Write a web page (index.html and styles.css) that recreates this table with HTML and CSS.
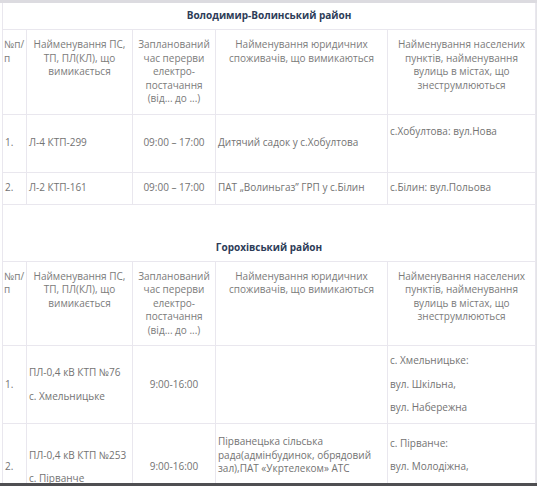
FILE: index.html
```html
<!DOCTYPE html>
<html lang="uk">
<head>
<meta charset="utf-8">
<link rel="stylesheet" href="styles.css">
</head>
<body>
<div class="frame">
<table class="grid">
  <colgroup>
    <col class="c1"><col class="c2"><col class="c3"><col class="c4"><col class="c5">
  </colgroup>
  <tr class="title"><td colspan="5">Володимир-Волинський район</td></tr>
  <tr class="head">
    <td class="left">№п/п</td>
    <td>Найменування ПС, ТП, ПЛ(КЛ), що вимикається</td>
    <td>Запланований час перерви електро-постачання (від... до ...)</td>
    <td>Найменування юридичних споживачів, що вимикаються</td>
    <td>Найменування населених пунктів, найменування вулиць в містах, що знеструмлюються</td>
  </tr>
  <tr class="row r1">
    <td>1.</td>
    <td>Л-4 КТП-299</td>
    <td class="center">09:00 – 17:00</td>
    <td>Дитячий садок у с.Хобултова</td>
    <td><p>с.Хобултова: вул.Нова</p><p>&nbsp;</p></td>
  </tr>
  <tr class="row r2">
    <td>2.</td>
    <td>Л-2 КТП-161</td>
    <td class="center">09:00 – 17:00</td>
    <td>ПАТ „Волиньгаз” ГРП у с.Білин</td>
    <td>с.Білин: вул.Польова</td>
  </tr>
  <tr class="spacer"><td colspan="5"></td></tr>
  <tr class="title t2"><td colspan="5">Горохівський район</td></tr>
  <tr class="head">
    <td class="left">№п/п</td>
    <td>Найменування ПС, ТП, ПЛ(КЛ), що вимикається</td>
    <td>Запланований час перерви електро-постачання (від... до ...)</td>
    <td>Найменування юридичних споживачів, що вимикаються</td>
    <td>Найменування населених пунктів, найменування вулиць в містах, що знеструмлюються</td>
  </tr>
  <tr class="row r3">
    <td>1.</td>
    <td><p>ПЛ-0,4 кВ КТП №76</p><p>с. Хмельницьке</p></td>
    <td class="center">9:00-16:00</td>
    <td></td>
    <td><p>с. Хмельницьке:</p><p>вул. Шкільна,</p><p>вул. Набережна</p></td>
  </tr>
  <tr class="row r4">
    <td>2.</td>
    <td><p>ПЛ-0,4 кВ КТП №253</p><p>с. Пірванче</p></td>
    <td class="center">9:00-16:00</td>
    <td><p>Пірванецька сільська рада(адмінбудинок, обрядовий зал),ПАТ «Укртелеком» АТС</p><p>&nbsp;</p></td>
    <td><p>с. Пірванче:</p><p>вул. Молодіжна,</p><p>&nbsp;</p></td>
  </tr>
</table>
</div>
<div class="bottombar"></div>
</body>
</html>
```
FILE: styles.css
```css
html, body {
  margin: 0;
  padding: 0;
  background: #ffffff;
  height: 486px;
  overflow: hidden;
}
body {
  font-family: "Open Sans", "Noto Sans", sans-serif;
  font-size: 10px;
  color: #737373;
}
.frame {
  border-top: 3px solid #dcdbe0;
  padding-left: 2px;
  padding-right: 1px;
  background: linear-gradient(to right, #ffffff 0, #ffffff calc(100% - 1px), #e4e4e8 calc(100% - 1px));
}
.grid {
  width: 534px;
  border-collapse: collapse;
  table-layout: fixed;
  border-left: 1px solid #e9e7ee;
  border-right: 1px solid #e9e7ee;
  background: #fff;
}
.c1 { width: 24px; }
.c2 { width: 106px; }
.c3 { width: 83px; }
.c4 { width: 172px; }
.c5 { width: 148px; }
td {
  border: 1px solid #e9e7ee;
  padding: 0 2px;
  line-height: 13.5px;
  vertical-align: middle;
}
td p {
  margin: 0;
}
td p + p {
  margin-top: 10px;
}
.title td {
  border-top: none;
  height: 26px;
  text-align: center;
  font-weight: 700;
  color: #2d3c58;
  padding: 0;
}
.head td {
  vertical-align: top;
  text-align: center;
  padding: 8px 2px 8px;
  height: 67px;
  color: #7b7b7b;
}
.head td.left {
  text-align: left;
  padding-left: 1px;
}
.center { text-align: center; }
.r1 td { height: 57px; }
.r2 td { height: 31px; }
.spacer td {
  border-bottom: none;
  height: 30px;
}
.t2 td { border-top: none; }
.r3 td { height: 77px; }
.r4 td { height: 86px; }
.bottombar {
  position: fixed;
  left: 0;
  right: 0;
  bottom: 0;
  height: 3px;
  background: #4f4f52;
}
```
